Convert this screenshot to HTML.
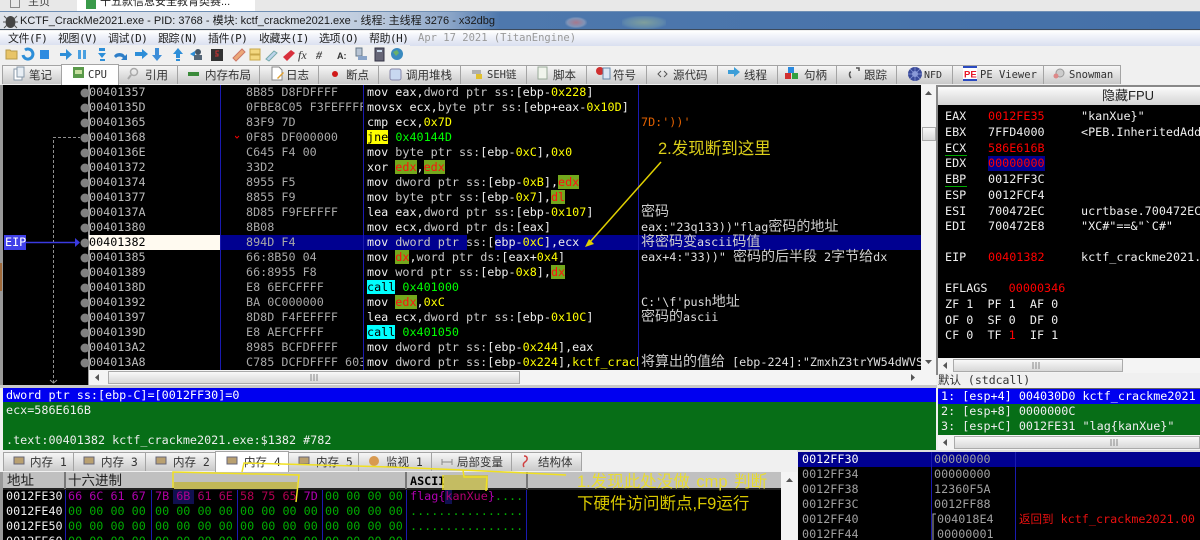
<!DOCTYPE html>
<html><head><meta charset="utf-8"><style>
html,body{margin:0;padding:0;width:1200px;height:540px;overflow:hidden;background:#f0f0f0}
body{position:relative;font-family:"Liberation Sans","Noto Sans CJK SC",sans-serif}
div,pre,svg{position:absolute;margin:0}
pre{font-family:"DejaVu Sans Mono","Liberation Mono","Noto Sans CJK SC",monospace;font-size:11.76px;line-height:15px;white-space:pre;overflow:hidden;color:#ddd}
b{font-weight:normal;color:#ff0}
em{font-style:normal;color:#ff1010;background:#74a81c}
u{text-decoration:none;color:#c8c8c8}
i{font-style:normal;font-family:"Noto Sans CJK SC",sans-serif;font-size:14px;line-height:0;color:#ccc}
.g{color:#0f0}.j{background:#ff0;color:#000}.c{background:#0ff;color:#000}
.t{top:65px;height:18px;background:linear-gradient(#f6f6f6,#c9c9c9);border:1px solid #a4a4a4;border-bottom:0;box-sizing:content-box;font:11.5px/19px "DejaVu Sans Mono","Noto Sans CJK SC",sans-serif;color:#333;white-space:pre}
.t span,.bt span{position:absolute;top:0}
.bt{top:452px;height:18px;background:linear-gradient(#f6f6f6,#c9c9c9);border:1px solid #a4a4a4;border-bottom:0;font:11.5px/19px "DejaVu Sans Mono","Noto Sans CJK SC",sans-serif;color:#333;white-space:pre}
.m{top:31px;font:11px/15px "DejaVu Sans Mono","Noto Sans CJK SC",sans-serif;letter-spacing:-.5px;color:#222;white-space:pre}
.ic{top:0;left:0}
.sb{background:linear-gradient(#f8f8f8,#d8d8d8);border:1px solid #aaa;box-sizing:border-box}
</style></head><body>
<!-- browser strip -->
<div style="left:0;top:0;width:1200px;height:12px;background:#e8e8e8"></div>
<div style="left:77px;top:0;width:178px;height:12px;background:#fff"></div>
<div style="left:28px;top:-5px;font-size:11px;line-height:14px;color:#444">主页</div>
<div style="left:100px;top:-5px;font-size:11px;line-height:14px;color:#222;white-space:pre">十五款信息安全教育类赛...</div>
<div style="left:86px;top:0;width:10px;height:9px;background:#3a9a4a"></div>
<div style="left:10px;top:0;width:10px;height:8px;border:1px solid #888;border-top:0;box-sizing:border-box"></div>
<!-- title -->
<div style="left:0;top:11px;width:1200px;height:19px;background:linear-gradient(90deg,#dfe3ea 0,#d6dde8 280px,#b9c8dc 380px,#8ba5c8 450px,#4e78ad 500px,#4470a8 1200px);border-top:1px solid #6f8fb5;border-bottom:1px solid #3c4a5c;box-sizing:border-box"></div>
<div style="left:565px;top:17px;width:22px;height:11px;background:radial-gradient(#a8788c,#7f94b8 55%,transparent 75%)"></div>
<div style="left:622px;top:16px;width:44px;height:13px;background:radial-gradient(#7f9f9c,#5f88ac 60%,transparent 80%)"></div>
<svg style="left:3px;top:13px" width="15" height="16" viewBox="0 0 15 16"><ellipse cx="7.5" cy="9" rx="5" ry="6" fill="#444"/><path d="M1 3l3 3M14 3l-3 3M0 9h3M12 9h3M1 15l3-3M14 15l-3-3" stroke="#555" fill="none"/></svg>
<div style="left:20px;top:12px;font-size:11px;line-height:18px;color:#1a1a1a;white-space:pre">KCTF_CrackMe2021.exe - PID: 3768 - 模块: kctf_crackme2021.exe - 线程: 主线程 3276 - x32dbg</div>
<!-- menu -->
<div style="left:0;top:31px;width:1200px;height:15px;background:linear-gradient(#fff,#f4f6fb 25%,#d9dff0)"></div>
<div class="m" style="left:8px">文件(F)</div><div class="m" style="left:58px">视图(V)</div><div class="m" style="left:108px">调试(D)</div><div class="m" style="left:158px">跟踪(N)</div><div class="m" style="left:208px">插件(P)</div><div class="m" style="left:259px">收藏夹(I)</div><div class="m" style="left:319px">选项(O)</div><div class="m" style="left:369px">帮助(H)</div>
<div class="m" style="left:418px;color:#999;font-size:10.5px;letter-spacing:0">Apr 17 2021 (TitanEngine)</div>
<!-- toolbar -->
<svg style="left:0;top:45px" width="410" height="18" viewBox="0 0 410 18">
<rect width="410" height="18" fill="#f0f0f0"/>
<path d="M6 5h4l1 1h6v8H6z" fill="#e8c468" stroke="#b99a48"/>
<path d="M25 5a5 5 0 1 1-2 5" fill="none" stroke="#2d8ed8" stroke-width="3"/>
<rect x="40" y="5" width="9" height="9" fill="#2e8be0"/>
<path d="M60 8h6V4l6 5.500-6 5.500v-4h-6z" fill="#2d8ed8"/>
<path d="M78 5h3v9h-3zM83 5h3v9h-3z" fill="#4aa0e0"/>
<path d="M99 3h6v3h-6zM102 8l-4 0 4 5 4-5zM100 14h5v2h-5z" fill="#2d8ed8"/>
<path d="M114 11a6 5 0 0 1 11 0l2-2v6h-6l2-2a4 3 0 0 0-7 0" fill="#2d7ec8"/>
<path d="M135 7h7V4l6 5-6 5v-3h-7z" fill="#2d8ed8"/>
<path d="M155 3h4v7h3l-5 6-5-6h3z" fill="#3d8ed8"/>
<path d="M178 3l5 6h-3v4h-4V9h-3zM176 14h4v2h-4z" fill="#2d8ed8"/>
<path d="M190 9l5-3v6z" fill="#2d8ed8"/><circle cx="198" cy="7" r="3" fill="#456"/><rect x="194" y="10" width="8" height="5" fill="#567"/>
<rect x="211" y="4" width="12" height="12" fill="#333"/><path d="M219 6h-3v3h2v2h-3" stroke="#c33" fill="none"/>
<path d="M233 13l9-9 3 3-9 9z" fill="#eca878" stroke="#c76"/>
<rect x="250" y="4" width="10" height="5" fill="#f3d880" stroke="#c9a84a"/><rect x="250" y="10" width="10" height="5" fill="#f3d880" stroke="#c9a84a"/>
<path d="M266 14l8-8 3 2-8 8z" fill="#bcd4ec" stroke="#7aa"/>
<path d="M283 12l8-7 4 3-8 8z" fill="#d8303c"/>
<text x="298" y="14" font-family="Liberation Serif" font-style="italic" font-size="12" fill="#333">fx</text>
<text x="316" y="14" font-family="Liberation Serif" font-style="italic" font-size="12" font-weight="bold" fill="#444">#</text>
<text x="337" y="14" font-family="Liberation Sans" font-size="9" font-weight="bold" fill="#333">A:</text>
<rect x="356" y="3" width="6" height="8" fill="#b8c4d4" stroke="#678"/><rect x="358" y="11" width="9" height="4" fill="#8aa4c8"/>
<rect x="375" y="3" width="9" height="13" fill="#667" stroke="#334"/><rect x="377" y="5" width="5" height="2" fill="#cde"/>
<circle cx="397" cy="9" r="6" fill="#3a8abf"/><path d="M393 7l4-2 2 3-3 3z" fill="#6ab06a"/>
</svg>
<!-- tabs -->
<div style="left:0;top:63px;width:1200px;height:22px;background:#f0f0f0"></div>
<div class="t" style="left:2px;width:58px"><span style="left:26px">笔记</span></div>
<div class="t" style="left:61px;width:56px;top:64px;height:20px;background:#fff;font-family:'DejaVu Sans Mono';font-size:10.5px"><span style="left:26px;top:1px">CPU</span></div>
<div class="t" style="left:118px;width:58px"><span style="left:26px">引用</span></div>
<div class="t" style="left:177px;width:81px"><span style="left:27px">内存布局</span></div>
<div class="t" style="left:259px;width:58px"><span style="left:26px">日志</span></div>
<div class="t" style="left:318px;width:59px"><span style="left:27px">断点</span></div>
<div class="t" style="left:378px;width:81px"><span style="left:27px">调用堆栈</span></div>
<div class="t" style="left:460px;width:65px"><span style="left:26px;font-size:10.5px">SEH链</span></div>
<div class="t" style="left:526px;width:59px"><span style="left:26px">脚本</span></div>
<div class="t" style="left:586px;width:59px"><span style="left:26px">符号</span></div>
<div class="t" style="left:646px;width:70px"><span style="left:26px">源代码</span></div>
<div class="t" style="left:717px;width:59px"><span style="left:26px">线程</span></div>
<div class="t" style="left:777px;width:58px"><span style="left:26px">句柄</span></div>
<div class="t" style="left:836px;width:59px"><span style="left:27px">跟踪</span></div>
<div class="t" style="left:896px;width:55px;font-size:10px"><span style="left:27px">NFD</span></div>
<div class="t" style="left:952px;width:90px;font-size:10.5px"><span style="left:27px">PE Viewer</span></div>
<div class="t" style="left:1043px;width:76px;font-size:10.5px"><span style="left:25px">Snowman</span></div>
<svg style="left:0;top:64px" width="1200" height="22" viewBox="0 0 1200 22">
<rect x="14" y="5" width="8" height="11" fill="#fff" stroke="#89a"/><rect x="17" y="3" width="7" height="10" fill="#e8eef4" stroke="#89a"/>
<rect x="73" y="3" width="11" height="11" fill="#5a9a4a"/><rect x="75" y="6" width="7" height="4" fill="#c8e0a0"/>
<circle cx="134" cy="8" r="3.500" fill="none" stroke="#aaa" stroke-width="1.500"/><path d="M131 11l-3 4" stroke="#aaa" stroke-width="2"/>
<rect x="188" y="8" width="11" height="4" fill="#3a8a3a"/>
<path d="M272 3h7l3 3v10h-10z" fill="#fff" stroke="#888"/><path d="M277 14l6-6 1 1-6 6z" fill="#e0a030"/>
<circle cx="335" cy="10" r="3" fill="#d01818"/>
<rect x="390" y="5" width="11" height="11" rx="2" fill="#c8d8f0" stroke="#88a"/>
<rect x="472" y="6" width="9" height="4" fill="#b0b0b0"/><rect x="476" y="10" width="6" height="5" fill="#e0c030"/>
<rect x="538" y="3" width="9" height="12" fill="#f0f4ec" stroke="#9a9"/>
<circle cx="600" cy="7" r="4" fill="#d03030"/><rect x="603" y="4" width="7" height="11" fill="#dce6f4" stroke="#68a"/>
<path d="M661 7l-3 3 3 3M664 7l3 3-3 3" fill="none" stroke="#555"/>
<path d="M728 6h6V3l6 5-6 5v-3h-6z" fill="#3d9ed8"/>
<rect x="788" y="3" width="6" height="6" fill="#2a8ae0"/><rect x="785" y="9" width="6" height="6" fill="#d03030"/><rect x="792" y="9" width="6" height="6" fill="#30a040"/>
<path d="M851 8c-2 0-2 4 0 6M856 4l3 0 0 3" fill="none" stroke="#555" stroke-width="1.500"/>
<circle cx="915" cy="10" r="7" fill="#3a4a9a"/><circle cx="915" cy="10" r="3" fill="#8a9ad8"/><path d="M908 10h14M915 3v14M910 5l10 10M920 5l-10 10" stroke="#8a9ad8" stroke-width=".7"/>
<rect x="963" y="2" width="14" height="15" fill="#fff"/><rect x="963" y="2" width="14" height="2" fill="#2a4ac0"/><rect x="963" y="15" width="14" height="2" fill="#2a4ac0"/><text x="964" y="13.500" font-family="Liberation Sans" font-weight="bold" font-size="9.500" fill="#e81828">PE</text>
<circle cx="1060" cy="9" r="4" fill="#ccc" stroke="#999"/><circle cx="1056" cy="12" r="2.500" fill="#d88"/>
</svg>
<!-- disasm -->
<div style="left:0;top:85px;width:3px;height:303px;background:#999"></div>
<div style="left:0;top:263px;width:2px;height:28px;background:#a06a3a"></div>
<div style="left:3px;top:85px;width:918px;height:285px;background:#000"></div>
<div style="left:3px;top:370px;width:86px;height:15px;background:#000"></div>
<div style="left:88px;top:85px;width:2px;height:300px;background:#999"></div>
<div style="left:89px;top:235px;width:131px;height:15px;background:#fffaf0"></div>
<div style="left:221px;top:235px;width:700px;height:15px;background:#000090"></div>
<div style="left:467px;top:235px;width:28px;height:15px;background:#000"></div>
<div style="left:220px;top:85px;width:1px;height:285px;background:#1a1ab0"></div>
<div style="left:363px;top:85px;width:1px;height:285px;background:#1a1ab0"></div>
<div style="left:638px;top:85px;width:1px;height:285px;background:#1a1ab0"></div>
<svg style="left:0;top:85px" width="92" height="300" viewBox="0 0 92 300">
<g fill="#808080"><circle cx="85" cy="8" r="4.500"/><circle cx="85" cy="23" r="4.500"/><circle cx="85" cy="38" r="4.500"/><circle cx="85" cy="53" r="4.500"/><circle cx="85" cy="68" r="4.500"/><circle cx="85" cy="83" r="4.500"/><circle cx="85" cy="98" r="4.500"/><circle cx="85" cy="113" r="4.500"/><circle cx="85" cy="128" r="4.500"/><circle cx="85" cy="143" r="4.500"/><circle cx="85" cy="158" r="4.500"/><circle cx="85" cy="173" r="4.500"/><circle cx="85" cy="188" r="4.500"/><circle cx="85" cy="203" r="4.500"/><circle cx="85" cy="218" r="4.500"/><circle cx="85" cy="233" r="4.500"/><circle cx="85" cy="248" r="4.500"/><circle cx="85" cy="263" r="4.500"/><circle cx="85" cy="278" r="4.500"/></g>
<path d="M53.500 298V52.500H80" fill="none" stroke="#909090" stroke-dasharray="3 2"/>
<path d="M50 295l3.500 3 3.500-3" fill="none" stroke="#999"/>
<path d="M25 157.500h50" stroke="#3a3ae0" stroke-width="1.500"/><path d="M75 153l5 4.500-5 4.500z" fill="#3a3ae0"/>
</svg>
<div style="left:4px;top:235px;width:22px;height:15px;background:#4040e8"></div>
<pre style="left:5px;top:235px;color:#fff">EIP</pre>
<pre style="left:89px;top:85px;width:130px;color:#bbb">00401357
0040135D
00401365
00401368
0040136E
00401372
00401374
00401377
0040137A
00401380
<span style="color:#000">00401382</span>
00401385
00401389
0040138D
00401392
00401397
0040139D
004013A2
004013A8</pre>
<pre style="left:246px;top:85px;width:117px;color:#a8a8a8">8B85 D8FDFFFF
0FBE8C05 F3FEFFFF
83F9 7D
0F85 DF000000
C645 F4 00
33D2
8955 F5
8855 F9
8D85 F9FEFFFF
8B08
894D F4
66:8B50 04
66:8955 F8
E8 6EFCFFFF
BA 0C000000
8D8D F4FEFFFF
E8 AEFCFFFF
8985 BCFDFFFF
C785 DCFDFFFF 603</pre>
<svg style="left:235px;top:135px" width="6" height="6"><path d="M0 1l2 2 2-2" stroke="#e00" fill="none"/></svg>
<pre style="left:367px;top:85px;width:271px;color:#eee">mov eax,<u>dword ptr ss:</u>[ebp-<b>0x228</b>]
movsx ecx,<u>byte ptr ss:</u>[ebp+eax-<b>0x10D</b>]
cmp ecx,<b>0x7D</b>
<span class="j">jne</span> <span class="g">0x40144D</span>
mov <u>byte ptr ss:</u>[ebp-<b>0xC</b>],<b>0x0</b>
xor <em>edx</em>,<em>edx</em>
mov <u>dword ptr ss:</u>[ebp-<b>0xB</b>],<em>edx</em>
mov <u>byte ptr ss:</u>[ebp-<b>0x7</b>],<em>dl</em>
lea eax,<u>dword ptr ss:</u>[ebp-<b>0x107</b>]
mov ecx,<u>dword ptr ds:</u>[eax]
mov <u>dword ptr ss:</u>[ebp-<b>0xC</b>],ecx
mov <em>dx</em>,<u>word ptr ds:</u>[eax+<b>0x4</b>]
mov <u>word ptr ss:</u>[ebp-<b>0x8</b>],<em>dx</em>
<span class="c">call</span> <span class="g">0x401000</span>
mov <em>edx</em>,<b>0xC</b>
lea ecx,<u>dword ptr ss:</u>[ebp-<b>0x10C</b>]
<span class="c">call</span> <span class="g">0x401050</span>
mov <u>dword ptr ss:</u>[ebp-<b>0x244</b>],eax
mov <u>dword ptr ss:</u>[ebp-<b>0x224</b>],<b>kctf_crackme2021</b></pre>
<pre style="left:641px;top:85px;width:280px;color:#ddd">


<span style="color:#e06000">7D:'))'</span>





<i>密码</i>
eax:"23q133))"flag<i>密码的地址</i>
<i>将密码变</i>ascii<i>码值</i>
eax+4:"33))" <i>密码的后半段</i> 2<i>字节给</i>dx


C:'\f'push<i>地址</i>
<i>密码的</i>ascii


<i>将算出的值给</i> [ebp-224]:"ZmxhZ3trYW54dWVS</pre>
<!-- disasm scrollbars -->
<div style="left:921px;top:85px;width:15px;height:285px;background:#f4f4f4"></div>
<div class="sb" style="left:922px;top:127px;width:14px;height:14px"></div>
<svg style="left:921px;top:85px" width="15" height="285"><path d="M4 10l3.500-4 3.500 4z" fill="#555"/><path d="M4 275l3.500 4 3.500-4z" fill="#555"/></svg>
<div style="left:89px;top:370px;width:847px;height:15px;background:#f4f4f4"></div>
<div class="sb" style="left:108px;top:371px;width:412px;height:13px"></div>
<svg style="left:89px;top:370px" width="847" height="15"><path d="M10 4l-4 3.500 4 3.500z" fill="#555"/><path d="M822 4l4 3.500-4 3.500z" fill="#555"/><path d="M222 4v7M225 4v7M228 4v7" stroke="#888"/></svg>
<!-- info -->
<div style="left:0;top:385px;width:937px;height:3px;background:#c8c8c8"></div>
<div style="left:3px;top:388px;width:933px;height:14px;background:#0000f0"></div>
<div style="left:3px;top:402px;width:933px;height:48px;background:#076e17"></div>
<pre style="left:6px;top:388px;color:#fff;line-height:14px">dword ptr ss:[ebp-C]=[0012FF30]=0</pre>
<pre style="left:6px;top:403px;color:#eee">ecx=586E616B</pre>
<pre style="left:6px;top:433px;color:#eee">.text:00401382 kctf_crackme2021.exe:$1382 #782</pre>
<!-- bottom tabs -->
<div style="left:0;top:450px;width:797px;height:22px;background:#f0f0f0"></div>
<div class="bt" style="left:3px;width:69px"><span style="left:26px">内存 1</span></div>
<div class="bt" style="left:73px;width:71px"><span style="left:27px">内存 3</span></div>
<div class="bt" style="left:145px;width:69px"><span style="left:27px">内存 2</span></div>
<div class="bt" style="left:215px;top:451px;height:20px;width:72px;background:#fff"><span style="left:28px;top:1px">内存 4</span></div>
<div class="bt" style="left:288px;width:69px"><span style="left:27px">内存 5</span></div>
<div class="bt" style="left:358px;width:72px"><span style="left:27px">监视 1</span></div>
<div class="bt" style="left:431px;width:79px"><span style="left:25px">局部变量</span></div>
<div class="bt" style="left:511px;width:69px"><span style="left:26px">结构体</span></div>
<svg style="left:0;top:452px" width="590" height="20"><g fill="#b9a070" stroke="#667"><rect x="14" y="5" width="10" height="7"/><rect x="84" y="5" width="10" height="7"/><rect x="156" y="5" width="10" height="7"/><rect x="227" y="5" width="10" height="7"/><rect x="299" y="5" width="10" height="7"/></g><circle cx="374" cy="9" r="5" fill="#d89a50"/><path d="M442 7v6M452 7v6M442 10h10" stroke="#888"/><path d="M524 4c4 0 4 4 1 6s-1 5-1 5" stroke="#d04040" fill="none" stroke-width="1.500"/></svg>
<!-- memory -->
<div style="left:3px;top:472px;width:778px;height:17px;background:#c0c0c0"></div>
<div style="left:3px;top:489px;width:778px;height:51px;background:#000"></div>
<div style="left:0;top:472px;width:3px;height:68px;background:#999"></div>
<div style="left:3px;top:488px;width:778px;height:2px;background:#222"></div>
<div style="left:64px;top:472px;width:2px;height:17px;background:#777"></div>
<div style="left:405px;top:472px;width:2px;height:17px;background:#777"></div>
<div style="left:526px;top:472px;width:2px;height:17px;background:#777"></div>
<div style="left:7px;top:472px;font-size:13.5px;line-height:17px;color:#222;white-space:pre">地址</div>
<div style="left:68px;top:472px;font-size:13.5px;line-height:17px;color:#222;white-space:pre">十六进制</div>
<pre style="left:410px;top:474px;color:#000;line-height:14px;font-weight:bold">ASCII</pre>
<div style="left:65px;top:490px;width:1px;height:50px;background:#1a1ab0"></div>
<div style="left:151px;top:490px;width:1px;height:50px;background:#1a1ab0"></div>
<div style="left:237px;top:490px;width:1px;height:50px;background:#1a1ab0"></div>
<div style="left:322px;top:490px;width:1px;height:50px;background:#1a1ab0"></div>
<div style="left:406px;top:490px;width:1px;height:50px;background:#1a1ab0"></div>
<div style="left:526px;top:490px;width:1px;height:50px;background:#1a1ab0"></div>
<div style="left:173px;top:490px;width:21px;height:14px;background:#101050"></div>
<div style="left:445px;top:490px;width:7px;height:14px;background:#101050"></div>
<pre style="left:6px;top:489px;color:#eee">0012FE30
0012FE40
0012FE50
0012FE60</pre>
<pre style="left:68px;top:489px;color:#0a0"><span style="color:#b000b0">66 6C 61 67</span>
00 00 00 00
00 00 00 00
00 00 00 00</pre>
<pre style="left:155px;top:489px;color:#0a0"><span style="color:#b000a0">7B</span> <span style="color:#b00090">6B</span> <span style="color:#b00070">61</span> <span style="color:#b00060">6E</span>
00 00 00 00
00 00 00 00
00 00 00 00</pre>
<pre style="left:240px;top:489px;color:#0a0"><span style="color:#b00050">58 75 65</span> <span style="color:#b000b0">7D</span>
00 00 00 00
00 00 00 00
00 00 00 00</pre>
<pre style="left:325px;top:489px;color:#0a0">00 00 00 00
00 00 00 00
00 00 00 00
00 00 00 00</pre>
<pre style="left:410px;top:489px;color:#0a0"><span style="color:#b000b0">flag{</span><span style="color:#b00070">kanXue</span><span style="color:#b000b0">}</span>....
................
................
................</pre>
<div style="left:781px;top:472px;width:16px;height:68px;background:#f4f4f4"></div>
<svg style="left:781px;top:472px" width="16" height="68"><path d="M5 10l3.500-4 3.500 4z" fill="#555"/></svg>
<!-- annotations over memory -->
<svg style="left:0;top:0" width="1200" height="540" viewBox="0 0 1200 540">
<rect x="174" y="482" width="123" height="7" fill="#c2b858"/>
<rect x="444" y="475" width="44" height="15" fill="#c4bc62"/>
<g fill="none" stroke="#f0e020" stroke-width="1.500">
<path d="M173 488V472L299 475L296 502"/>
<path d="M242 472L244 463L390 467L463 470L566 475"/>
<path d="M463 470L464 477L487 477L486 491M443 475V490"/>
</g>
<path d="M661 162L590 242" stroke="#e0d000" stroke-width="1.500"/><path d="M585 247l9-3-5-5z" fill="#e0d000"/>
</svg>
<div style="left:658px;top:138px;font-size:16.500px;line-height:22px;color:#dccf1a;white-space:pre">2.发现断到这里</div>
<div style="left:577px;top:471px;font-size:16.500px;line-height:22px;color:#e8dc30;white-space:pre;word-spacing:2px">1.发现此处没做 cmp 判断</div>
<div style="left:577px;top:493px;font-size:16.500px;line-height:22px;color:#d8c800;white-space:pre">下硬件访问断点,F9运行</div>
<!-- registers -->
<div style="left:936px;top:85px;width:264px;height:2px;background:#888"></div>
<div style="left:938px;top:87px;width:262px;height:18px;background:linear-gradient(#fbfbfb,#d4d4d4)"></div>
<div style="left:1102px;top:87px;font:13px/18px 'Liberation Sans','Noto Sans CJK SC',sans-serif;color:#222;white-space:pre">隐藏FPU</div>
<div style="left:938px;top:105px;width:262px;height:253px;background:#000"></div>
<div style="left:936px;top:85px;width:2px;height:290px;background:#888"></div>
<div style="left:988px;top:156px;width:57px;height:15px;background:#000090"></div>
<div style="left:945px;top:155px;width:22px;height:1px;background:#0a0"></div>
<div style="left:945px;top:186px;width:22px;height:1px;background:#0a0"></div>
<pre style="left:945px;top:109px;line-height:15.750px;color:#eee">EAX
EBX
ECX
EDX
EBP
ESP
ESI
EDI</pre>
<pre style="left:988px;top:109px;line-height:15.750px;color:#eee"><span style="color:#f00">0012FE35</span>
7FFD4000
<span style="color:#f00">586E616B</span>
<span style="color:#f00">00000000</span>
0012FF3C
0012FCF4
700472EC
700472E8</pre>
<pre style="left:1081px;top:109px;width:119px;line-height:15.750px;color:#eee">"kanXue}"
&lt;PEB.InheritedAddr


 
 
ucrtbase.700472EC
"XC#"==&amp;"`C#"</pre>
<pre style="left:945px;top:250px;color:#eee">EIP</pre>
<pre style="left:988px;top:250px;color:#f00">00401382</pre>
<pre style="left:1081px;top:250px;width:119px;color:#eee">kctf_crackme2021.</pre>
<pre style="left:945px;top:281px;line-height:15.750px;color:#eee">EFLAGS   <span style="color:#f00">00000346</span>
ZF 1  PF 1  AF 0
OF 0  SF 0  DF 0
CF 0  TF <span style="color:#f00">1</span>  IF 1</pre>
<div style="left:938px;top:358px;width:262px;height:15px;background:#f4f4f4"></div>
<div class="sb" style="left:953px;top:359px;width:170px;height:13px"></div>
<svg style="left:938px;top:358px" width="262" height="15"><path d="M9 4l-4 3.500 4 3.500z" fill="#555"/><path d="M95 4v7M98 4v7M101 4v7" stroke="#888"/></svg>
<!-- args -->
<div style="left:938px;top:373px;width:262px;height:15px;background:#f0f0f0;font:11.500px/15px 'DejaVu Sans Mono','Noto Sans CJK SC',monospace;color:#333;white-space:pre">默认 (stdcall)</div>
<div style="left:938px;top:388px;width:262px;height:1px;background:#666"></div>
<div style="left:938px;top:389px;width:262px;height:15px;background:#0000f0"></div>
<div style="left:938px;top:404px;width:262px;height:31px;background:#076e17"></div>
<pre style="left:941px;top:389px;width:259px;color:#fff">1: [esp+4] 004030D0 kctf_crackme2021
<span style="color:#eee">2: [esp+8] 0000000C
3: [esp+C] 0012FE31 "lag{kanXue}"</span></pre>
<div style="left:938px;top:435px;width:262px;height:15px;background:#f4f4f4"></div>
<div class="sb" style="left:954px;top:436px;width:246px;height:13px"></div>
<svg style="left:938px;top:435px" width="262" height="15"><path d="M9 4l-4 3.500 4 3.500z" fill="#555"/><path d="M173 4v7M176 4v7M179 4v7" stroke="#888"/></svg>
<!-- stack -->
<div style="left:797px;top:450px;width:403px;height:2px;background:#ddd"></div>
<div style="left:798px;top:452px;width:402px;height:88px;background:#000"></div>
<div style="left:798px;top:452px;width:402px;height:15px;background:#000090"></div>
<div style="left:931px;top:452px;width:1px;height:88px;background:#1a1ab0"></div>
<div style="left:1015px;top:452px;width:1px;height:88px;background:#1a1ab0"></div>
<pre style="left:802px;top:452px;color:#a0a0a0"><span style="color:#fff">0012FF30</span>
0012FF34
0012FF38
0012FF3C
0012FF40
0012FF44</pre>
<pre style="left:934px;top:452px;color:#a0a0a0">00000000
00000000
12360F5A
0012FF88</pre>
<pre style="left:937px;top:512px;color:#a0a0a0">004018E4
00000001</pre>
<svg style="left:931px;top:512px" width="6" height="28"><path d="M5 2H2V28" stroke="#aaa" fill="none"/></svg>
<pre style="left:1019px;top:512px;width:181px;color:#e81010"><span style="font-family:'Noto Sans CJK SC',sans-serif;font-size:11.500px;line-height:0">返回到</span> kctf_crackme2021.00</pre>
</body></html>
